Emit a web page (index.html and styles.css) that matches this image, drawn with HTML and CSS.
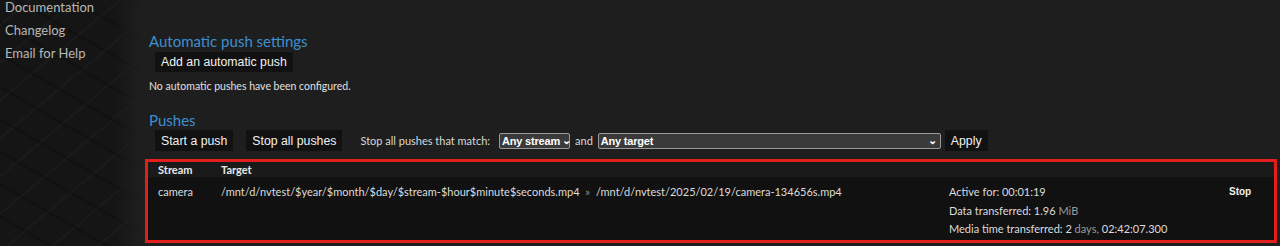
FILE: index.html
```html
<!DOCTYPE html>
<html>

<head>
    <title>Pushes</title>
    <link rel="stylesheet" href="styles.css">
</head>

<body>
    <div class="page">
        <div class="sidebar">
            <a class="menu-item">Documentation</a>
            <a class="menu-item">Changelog</a>
            <a class="menu-item">Email for Help</a>
        </div>
        <div class="main">
            <h3 class="heading">Automatic push settings</h3>
            <div class="btn-row">
                <button class="btn">Add an automatic push</button>
            </div>
            <p class="note">No automatic pushes have been configured.</p>

            <h3 class="heading heading-pushes">Pushes</h3>
            <div class="btn-row controls">
                <button class="btn">Start a push</button>
                <button class="btn">Stop all pushes</button>
                <span class="label">Stop all pushes that match:</span>
                <span class="select select-stream">Any stream<span class="chev">&#8964;</span></span>
                <span class="label and">and</span>
                <span class="select select-target">Any target<span class="chev">&#8964;</span></span>
                <button class="btn btn-apply">Apply</button>
            </div>

            <table class="pushes">
                <thead>
                    <tr>
                        <th class="col-stream">Stream</th>
                        <th>Target</th>
                        <th></th>
                        <th></th>
                    </tr>
                </thead>
                <tbody>
                    <tr>
                        <td class="col-stream">camera</td>
                        <td>/mnt/d/nvtest/$year/$month/$day/$stream-$hour$minute$seconds.mp4 <span class="sep">&raquo;</span> /mnt/d/nvtest/2025/02/19/camera-134656s.mp4</td>
                        <td class="stats">
                            <div>Active for: 00:01:19</div>
                            <div>Data transferred: 1.96 <span class="unit">MiB</span></div>
                            <div>Media time transferred: 2 <span class="unit">days,</span> 02:42:07.300</div>
                        </td>
                        <td class="actions"><span class="stop">Stop</span></td>
                    </tr>
                </tbody>
            </table>
        </div>
    </div>
</body>

</html>
```

FILE: styles.css
```css
html,
body {
    height: 100%;
    padding: 0;
    margin: 0;
}

body {
    background-color: #1e1e1e;
    color: #dddddd;
    font-family: Lato, "Open Sans", sans-serif;
    overflow: hidden;
}

.page {
    display: flex;
    height: 100%;
}

/* left menu, the hex texture is only hinted with gradients */
.sidebar {
    width: 140px;
    flex-shrink: 0;
    display: flex;
    flex-direction: column;
    padding-left: 5px;
    box-sizing: border-box;
    background:
        linear-gradient(to right, rgba(30, 30, 30, 0) 82%, #1e1e1e 100%),
        repeating-linear-gradient(30deg, rgba(0, 0, 0, 0) 0, rgba(0, 0, 0, 0) 24px, rgba(0, 0, 0, 0.25) 25px, rgba(0, 0, 0, 0) 28px),
        repeating-linear-gradient(-40deg, rgba(0, 0, 0, 0) 0, rgba(0, 0, 0, 0) 26px, rgba(40, 50, 60, 0.25) 27px, rgba(0, 0, 0, 0) 29px),
        #151515;
}

.menu-item {
    font-size: 13px;
    line-height: 23px;
    color: #b8b8b8;
    cursor: pointer;
}

.menu-item:first-child {
    margin-top: -4px;
}

.main {
    flex: 1;
    padding: 32px 3px 0 9px;
    min-width: 0;
}

.heading {
    margin: 0;
    font-size: 15px;
    line-height: 18px;
    font-weight: normal;
    color: #3d8fd1;
}

.heading-pushes {
    margin-top: 18px;
}

.btn-row {
    display: flex;
    align-items: center;
    padding-left: 6px;
    margin-top: 2px;
}

.btn {
    background-color: #111111;
    color: #f0f0f0;
    border: none;
    font-family: "Liberation Sans", Arial, sans-serif;
    font-size: 12.3px;
    height: 20px;
    padding: 0 6px;
    margin: 0;
    white-space: nowrap;
}

.controls {
    margin-top: 1px;
}

.controls .btn {
    height: 21px;
    margin-right: 13px;
}

.controls .btn-apply {
    margin-left: 4px;
    margin-right: 0;
    padding: 0 6px 0 6px;
}

.label {
    font-size: 11px;
    color: #d8d8d8;
    margin: 0 9px 0 5px;
    white-space: nowrap;
}

.label.and {
    margin: 0 5px 0 5px;
}

.select {
    display: flex;
    align-items: center;
    justify-content: space-between;
    box-sizing: border-box;
    height: 16px;
    border: 1px solid #9a9a9a;
    border-radius: 2px;
    background-color: #3a3a3a;
    color: #ffffff;
    font-family: "Liberation Sans", Arial, sans-serif;
    font-size: 11px;
    font-weight: bold;
    padding: 0 3px 0 2px;
    white-space: nowrap;
    letter-spacing: -0.2px;
}

.select-stream {
    width: 71px;
}

.select-target {
    width: 343px;
}

.chev {
    font-size: 11px;
    line-height: 8px;
    height: 10px;
    margin-left: 2px;
}

.note {
    margin: 7px 0 0 0;
    font-size: 10.5px;
    line-height: 14px;
    color: #e0e0e0;
}

/* push list */
.pushes {
    margin: 8px 0 0 -4px;
    width: calc(100% + 4px);
    border: 3px solid #e21f1d;
    border-collapse: collapse;
    background-color: #111111;
    font-size: 11px;
    color: #dcdcdc;
}

.pushes th {
    text-align: left;
    font-weight: bold;
    padding: 1px 0 0 0;
    height: 14px;
    line-height: 13px;
    vertical-align: top;
    background-color: #1a1a1a;
    color: #e8e8e8;
}

.pushes td {
    vertical-align: top;
    padding: 6px 0 1px 0;
    line-height: 18.5px;
}

.pushes .col-stream {
    width: 63px;
    padding-left: 10px;
}

.sep {
    color: #8a8a8a;
    margin: 0 3px;
    font-size: 11px;
}

.stats {
    width: 280px;
}

.unit {
    color: #9a9a9a;
}

.actions {
    width: 45px;
}

.stop {
    font-family: "Liberation Sans", Arial, sans-serif;
    font-weight: bold;
    font-size: 10px;
    color: #f0f0f0;
    display: block;
}
```
